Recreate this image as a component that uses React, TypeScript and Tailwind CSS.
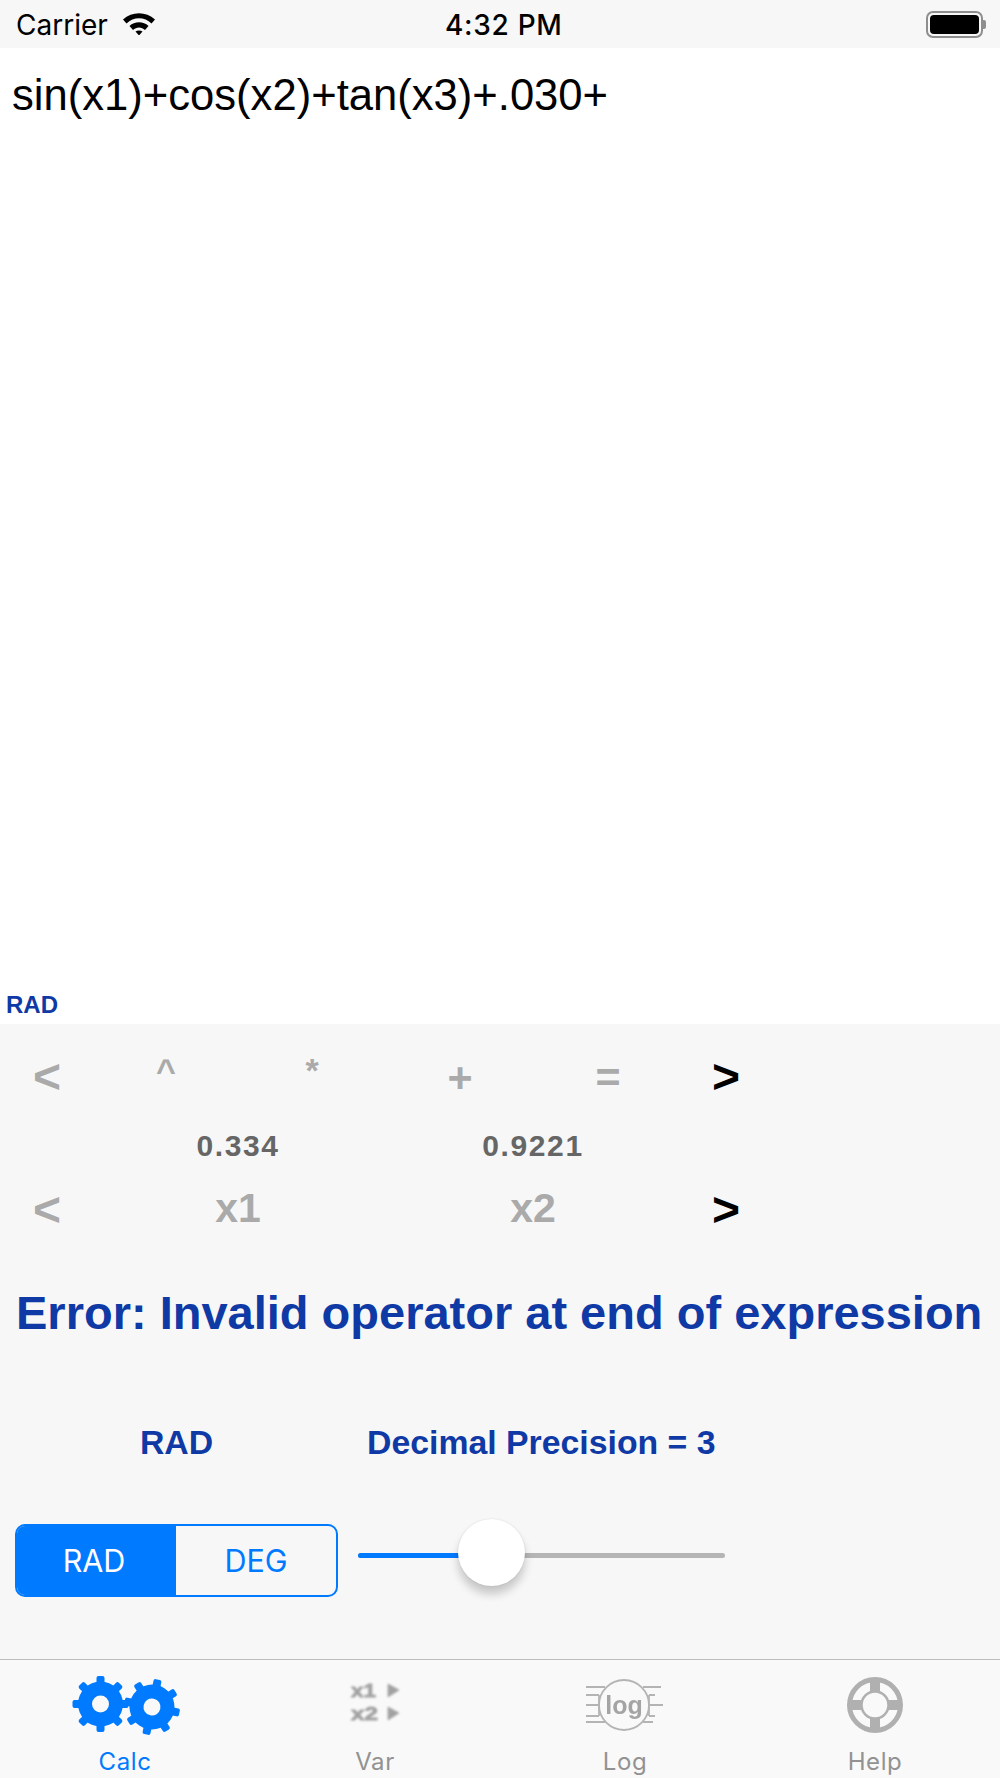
import React from "react";

const helv = "font-['Liberation_Sans',Arial,sans-serif]";
const sf = "font-['Inter',Roboto,sans-serif]";

function Gear({ cx, cy, rot = 0 }: { cx: number; cy: number; rot?: number }) {
  const teeth = [0, 45, 90, 135, 180, 225, 270, 315];
  return (
    <g transform={`rotate(${rot} ${cx} ${cy})`}>
      {teeth.map((a) => (
        <rect key={a} x={cx - 4} y={cy - 28} width={8} height={12} rx={2} transform={`rotate(${a} ${cx} ${cy})`} />
      ))}
      <path fillRule="evenodd" d={`M${cx - 22.5} ${cy}a22.5 22.5 0 1 0 45 0a22.5 22.5 0 1 0 -45 0zM${cx - 8.5} ${cy}a8.5 8.5 0 1 1 17 0a8.5 8.5 0 1 1 -17 0z`} />
    </g>
  );
}

function TabLabel({ children, active }: { children: React.ReactNode; active?: boolean }) {
  return (
    <span className={`${sf} text-[24px] leading-[30px] tracking-[0.6px] ${active ? "text-[#007aff]" : "text-[#929292]"}`}>{children}</span>
  );
}

function Key({ w, children, dark, className = "" }: { w: string; children?: React.ReactNode; dark?: boolean; className?: string }) {
  return (
    <div className={`${w} flex items-center justify-center font-bold ${dark ? "text-black" : "text-[#aaaaaa]"} ${className}`}>{children}</div>
  );
}

export default function App() {
  return (
    <div className={`${helv} w-[1000px] h-[1778px] flex flex-col bg-white overflow-hidden`}>
      <div className="h-[48px] bg-[#f7f7f7] flex items-center pl-[16px] pr-[14px] relative">
        <div className="flex items-center gap-[14px] w-[160px]">
          <span className={`${sf} text-[28px] leading-[52px] mt-[2px] text-black`}>Carrier</span>
          <svg width="34" height="24" viewBox="0 0 34 24" className="mb-[2px] shrink-0">
            <path d="M1 8.5C10 0 24 0 33 8.5L29.5 12.5C22.5 5.5 11.5 5.5 4.5 12.5Z" fill="#000" />
            <path d="M7.5 15C12.5 10 21.5 10 26.5 15L23 19C19.5 15.5 14.5 15.5 11 19Z" fill="#000" />
            <path d="M13.5 20.5C15.5 19 18.5 19 20.5 20.5L17 24.5Z" fill="#000" />
          </svg>
        </div>
        <span className={`${sf} text-[28px] leading-[52px] mt-[2px] font-medium text-black tracking-[0.7px] ml-[269px]`}>4:32 PM</span>
        <div className="flex items-center ml-auto">
          <div className="w-[57px] h-[27px] rounded-[7px] border-2 border-[#8e8e8e] p-[2px]">
            <div className="w-full h-full rounded-[4px] bg-black" />
          </div>
          <div className="w-[3px] h-[9px] rounded-r-[2px] bg-[#8e8e8e]" />
        </div>
      </div>

      <div className="h-[976px] bg-white flex flex-col justify-between">
        <div className="pl-[12px] pt-[21px] text-[43.6px] leading-[52px] text-black">sin(x1)+cos(x2)+tan(x3)+.030+</div>
        <div className="pl-[6px] pb-[7px] text-[24px] leading-[24px] font-bold text-[#0f3aa5]">RAD</div>
      </div>

      <div className="h-[635px] bg-[#f7f7f7] flex flex-col">
        <div className="flex h-[96px] items-center text-[43px] leading-none mt-[5px]">
          <Key w="w-[94px]" className="text-[48px]">&lt;</Key>
          <Key w="w-[144px]" className="mb-[14px] font-bold text-[34px]">^</Key>
          <Key w="w-[148px]" className="mb-[14px] text-[34px]">*</Key>
          <Key w="w-[148px]">+</Key>
          <Key w="w-[148px]">=</Key>
          <Key w="w-[88px]" dark className="text-[48px]">&gt;</Key>
        </div>
        <div className="flex h-[36px] items-center text-[30px] tracking-[1.6px] leading-none font-bold text-[#666666] mt-[3px]">
          <div className="w-[94px]" />
          <div className="w-[288px] text-center">0.334</div>
          <div className="w-[302px] text-center">0.9221</div>
        </div>
        <div className="flex h-[64px] items-center leading-none mt-[14px]">
          <Key w="w-[94px]" className="text-[48px]">&lt;</Key>
          <Key w="w-[288px]" className="text-[41px] mb-[3px]">x1</Key>
          <Key w="w-[302px]" className="text-[41px] mb-[3px]">x2</Key>
          <Key w="w-[84px]" dark className="text-[48px]">&gt;</Key>
        </div>
        <div className="h-[60px] mt-[41px] pl-[16px] text-[47px] leading-[60px] font-bold text-[#0f3aa5] whitespace-nowrap">Error: Invalid operator at end of expression</div>
        <div className="flex mt-[78px] h-[44px] items-center text-[33.8px] font-bold text-[#0f3aa5] leading-none">
          <div className="w-[353px] text-center">RAD</div>
          <div className="ml-[14px] whitespace-nowrap">Decimal Precision = 3</div>
        </div>
        <div className="flex items-center mt-[59px] pl-[15px]">
          <div className={`${sf} w-[323px] h-[73px] rounded-[10px] border-[2.5px] border-[#007aff] flex overflow-hidden text-[30.5px]`}>
            <div className="w-[159px] bg-[#007aff] text-white flex items-center justify-center pr-[5px]">RAD</div>
            <div className="flex-1 text-[#007aff] flex items-center justify-center">DEG</div>
          </div>
          <div className="ml-[20px] w-[367px] h-[5px] flex items-center rounded-full bg-[#b5b5b5] relative mt-[-11px]">
            <div className="w-[105px] h-[5px] rounded-l-full bg-[#007aff]" />
            <div className="absolute left-[100px] top-[-34px] w-[67px] h-[67px] rounded-full bg-white shadow-[0_8px_10px_rgba(0,0,0,0.2),0_0_2px_rgba(0,0,0,0.12)]" />
          </div>
        </div>
      </div>

      <div className="h-[119px] bg-[#f9f9f9] border-t-[1.5px] border-[#bdbdbd] grid grid-cols-4">
        <div className="flex flex-col items-center">
          <svg width="110" height="62" viewBox="70 1673 110 62" fill="#007aff" className="mt-[13px] blur-[0.6px]">
            <Gear cx={100.5} cy={1704} />
            <Gear cx={152} cy={1707} rot={12} />
          </svg>
          <div className="mt-[12px]"><TabLabel active>Calc</TabLabel></div>
        </div>
        <div className="flex flex-col items-center">
          <svg width="50" height="62" viewBox="0 0 50 62" className="mt-[11px] blur-[1px]" fill="#a2a2a2" stroke="#a2a2a2" strokeWidth="0.8">
            <text x="1" y="26" fontFamily="Liberation Sans, sans-serif" fontWeight="700" fontSize="19" textLength="25" lengthAdjust="spacingAndGlyphs">x1</text>
            <text x="1" y="49" fontFamily="Liberation Sans, sans-serif" fontWeight="700" fontSize="19" textLength="27" lengthAdjust="spacingAndGlyphs">x2</text>
            <path d="M38 13L49 19L38 26Z" />
            <path d="M38 36L49 42L38 49Z" />
          </svg>
          <div className="mt-[14px]"><TabLabel>Var</TabLabel></div>
        </div>
        <div className="flex flex-col items-center">
          <svg width="80" height="62" viewBox="0 0 80 62" className="mt-[13px] blur-[0.7px]" fill="none" stroke="#b4b4b4" strokeWidth="1.8">
            <circle cx="39" cy="32" r="25" />
            <path d="M1 14H20M58 14H76M1 32H14M64 32H78M1 49H20M58 49H68M14 22V43M64 22V43M1 22H14M1 43H14M64 22H70M64 43H70" />
            <text x="39" y="41" textAnchor="middle" fontFamily="Liberation Sans, sans-serif" fontWeight="700" fontSize="25" fill="#a4a4a4" stroke="none">log</text>
          </svg>
          <div className="mt-[12px]"><TabLabel>Log</TabLabel></div>
        </div>
        <div className="flex flex-col items-center">
          <svg width="60" height="62" viewBox="0 0 60 62" className="mt-[13px] blur-[0.7px]" fill="none" stroke="#b0b0b0">
            <circle cx="30" cy="32" r="25.5" strokeWidth="5" />
            <circle cx="30" cy="32" r="13.5" strokeWidth="2.5" />
            <path d="M30 5V19M30 45V59M3 32H17M43 32H57" strokeWidth="10" />
          </svg>
          <div className="mt-[12px]"><TabLabel>Help</TabLabel></div>
        </div>
      </div>
    </div>
  );
}
